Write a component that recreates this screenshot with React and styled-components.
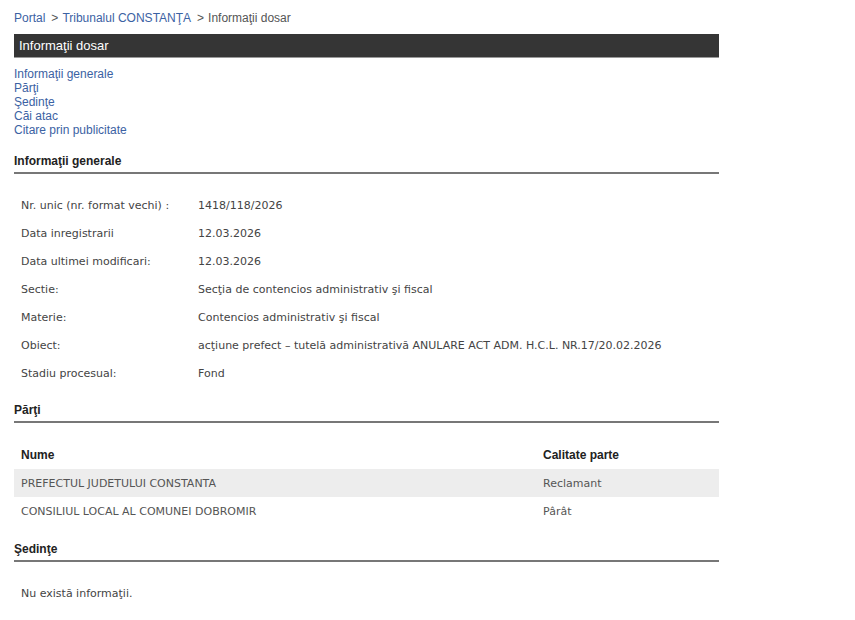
import React from "react";
import styled, { createGlobalStyle } from "styled-components";

const Global = createGlobalStyle`
  html, body { margin: 0; padding: 0; background: #fff; }
  body { font-family: "Liberation Sans", Arial, sans-serif; }
`;

const Page = styled.div`
  width: 705px;
  padding: 10px 0 0 14px;
`;

const Breadcrumb = styled.div`
  font-size: 12px;
  color: #555;
  height: 18px;
  line-height: 16px;
  a { color: #3b62a3; text-decoration: none; }
  span.sep { margin: 0 4px 0 6px; }
`;

const TitleBar = styled.div`
  margin-top: 6px;
  background: #353535;
  color: #fff;
  font-size: 13px;
  height: 23px;
  line-height: 23px;
  padding-left: 5px;
  border-bottom: 1px solid #999;
`;

const Nav = styled.nav`
  margin-top: 9px;
  display: flex;
  flex-direction: column;
  a {
    color: #3b62a3;
    font-size: 12px;
    line-height: 14px;
    text-decoration: none;
  }
`;

const SectionTitle = styled.h3`
  margin: ${(p) => p.$mt}px 0 0 0;
  font-family: "Liberation Sans", Arial, sans-serif;
  font-size: 12px;
  line-height: 14px;
  font-weight: bold;
  color: #222;
  padding-bottom: 4px;
  border-bottom: 2px solid #777;
`;

const InfoTable = styled.div`
  margin-top: 17px;
  display: grid;
  grid-template-columns: 184px 1fr;
  grid-auto-rows: 28px;
  font-family: "DejaVu Sans", Verdana, sans-serif;
  font-size: 11px;
  color: #444;
`;

const Cell = styled.div`
  display: flex;
  align-items: center;
  padding-left: ${(p) => (p.$first ? 7 : 0)}px;
`;

const PartyTable = styled.div`
  margin-top: 17px;
  font-family: "DejaVu Sans", Verdana, sans-serif;
  font-size: 11px;
`;

const PartyRow = styled.div`
  display: grid;
  grid-template-columns: 522px 1fr;
  height: ${(p) => (p.$head ? 29 : 28)}px;
  align-items: center;
  background: ${(p) => (p.$shade ? "#ededed" : "transparent")};
  color: ${(p) => (p.$head ? "#222" : "#555")};
  font-weight: ${(p) => (p.$head ? "bold" : "normal")};
  font-family: ${(p) => (p.$head ? '"Liberation Sans", Arial, sans-serif' : 'inherit')};
  font-size: ${(p) => (p.$head ? "12px" : "11px")};
  & > div { padding-left: 7px; }
`;

const Empty = styled.div`
  margin-top: 25px;
  padding-left: 7px;
  font-family: "DejaVu Sans", Verdana, sans-serif;
  font-size: 11px;
  color: #444;
`;

const info = [
  ["Nr. unic (nr. format vechi) :", "1418/118/2026"],
  ["Data inregistrarii", "12.03.2026"],
  ["Data ultimei modificari:", "12.03.2026"],
  ["Sectie:", "Secţia de contencios administrativ şi fiscal"],
  ["Materie:", "Contencios administrativ şi fiscal"],
  ["Obiect:", "acţiune prefect – tutelă administrativă ANULARE ACT ADM. H.C.L. NR.17/20.02.2026"],
  ["Stadiu procesual:", "Fond"],
];

export default function App() {
  return (
    <>
      <Global />
      <Page>
        <Breadcrumb>
          <a href="#">Portal</a>
          <span className="sep">&gt;</span>
          <a href="#">Tribunalul CONSTANŢA</a>
          <span className="sep">&gt;</span>
          Informaţii dosar
        </Breadcrumb>
        <TitleBar>Informaţii dosar</TitleBar>
        <Nav>
          <a href="#">Informaţii generale</a>
          <a href="#">Părţi</a>
          <a href="#">Şedinţe</a>
          <a href="#">Căi atac</a>
          <a href="#">Citare prin publicitate</a>
        </Nav>
        <SectionTitle $mt={17}>Informaţii generale</SectionTitle>
        <InfoTable>
          {info.map(([k, v]) => (
            <React.Fragment key={k}>
              <Cell $first>{k}</Cell>
              <Cell>{v}</Cell>
            </React.Fragment>
          ))}
        </InfoTable>
        <SectionTitle $mt={16}>Părţi</SectionTitle>
        <PartyTable>
          <PartyRow $head>
            <div>Nume</div>
            <div>Calitate parte</div>
          </PartyRow>
          <PartyRow $shade>
            <div>PREFECTUL JUDETULUI CONSTANTA</div>
            <div>Reclamant</div>
          </PartyRow>
          <PartyRow>
            <div>CONSILIUL LOCAL AL COMUNEI DOBROMIR</div>
            <div>Pârât</div>
          </PartyRow>
        </PartyTable>
        <SectionTitle $mt={17}>Şedinţe</SectionTitle>
        <Empty>Nu există informaţii.</Empty>
      </Page>
    </>
  );
}
